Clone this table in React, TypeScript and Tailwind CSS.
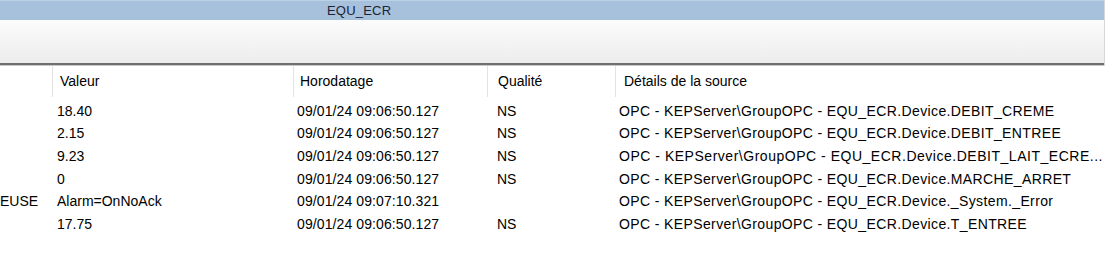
import React from 'react'

const rows = [
  { name: '', value: '18.40', time: '09/01/24 09:06:50.127', quality: 'NS', source: 'OPC - KEPServer\\GroupOPC - EQU_ECR.Device.DEBIT_CREME', wide: false },
  { name: '', value: '2.15', time: '09/01/24 09:06:50.127', quality: 'NS', source: 'OPC - KEPServer\\GroupOPC - EQU_ECR.Device.DEBIT_ENTREE', wide: false },
  { name: '', value: '9.23', time: '09/01/24 09:06:50.127', quality: 'NS', source: 'OPC - KEPServer\\GroupOPC - EQU_ECR.Device.DEBIT_LAIT_ECRE...', wide: true },
  { name: '', value: '0', time: '09/01/24 09:06:50.127', quality: 'NS', source: 'OPC - KEPServer\\GroupOPC - EQU_ECR.Device.MARCHE_ARRET', wide: false },
  { name: 'EUSE', value: 'Alarm=OnNoAck', time: '09/01/24 09:07:10.321', quality: '', source: 'OPC - KEPServer\\GroupOPC - EQU_ECR.Device._System._Error', wide: false },
  { name: '', value: '17.75', time: '09/01/24 09:06:50.127', quality: 'NS', source: 'OPC - KEPServer\\GroupOPC - EQU_ECR.Device.T_ENTREE', wide: false },
]

const cols = 'grid w-[1105px] grid-cols-[52px_241px_194px_128px_1fr]'

export default function App() {
  return (
    <div className="w-[1110px] h-[257px] bg-white overflow-hidden text-black" style={{ fontFamily: '"Liberation Sans", Arial, sans-serif' }}>
      <div className="w-[1105px] border-r border-[#d8d8d8]">
        {/* title bar */}
        <div className="h-[20px] bg-[#a7c0dc] border-t border-[#bcd0e6] flex items-center pl-[327px] text-[13px] tracking-[0.2px] text-[#1a2433]">
          EQU_ECR
        </div>
        {/* toolbar */}
        <div className="h-[43px] bg-gradient-to-b from-[#fcfcfc] to-[#ececec]" />
        <div className="h-[2px] bg-[#6e6e6e]" />
        <div className="h-px bg-[#c8c8c8]" />
      </div>

      {/* column header */}
      <div className={`${cols} h-[31px] text-[14px]`}>
        <div />
        <div className="border-l border-[#e3e3e3] pl-[7px] flex items-center">Valeur</div>
        <div className="border-l border-[#e3e3e3] pl-[6px] flex items-center">Horodatage</div>
        <div className="border-l border-[#e3e3e3] pl-[10px] flex items-center">Qualité</div>
        <div className="border-l border-[#e3e3e3] pl-[8px] flex items-center">Détails de la source</div>
      </div>

      {/* rows */}
      <div className="pt-[3px] text-[14px]">
        {rows.map((r, i) => (
          <div key={i} className={`${cols} h-[22.6px] items-center`}>
            <div className="overflow-hidden whitespace-nowrap">{r.name}</div>
            <div className="pl-[5px] whitespace-nowrap">{r.value}</div>
            <div className="pl-[4px] whitespace-nowrap tracking-[0.1px]">{r.time}</div>
            <div className="pl-[10px] whitespace-nowrap">{r.quality}</div>
            <div className={r.wide ? 'pl-[4px] whitespace-nowrap overflow-hidden tracking-[0.52px]' : 'pl-[4px] whitespace-nowrap overflow-hidden tracking-[0.38px]'}>{r.source}</div>
          </div>
        ))}
      </div>
    </div>
  )
}
